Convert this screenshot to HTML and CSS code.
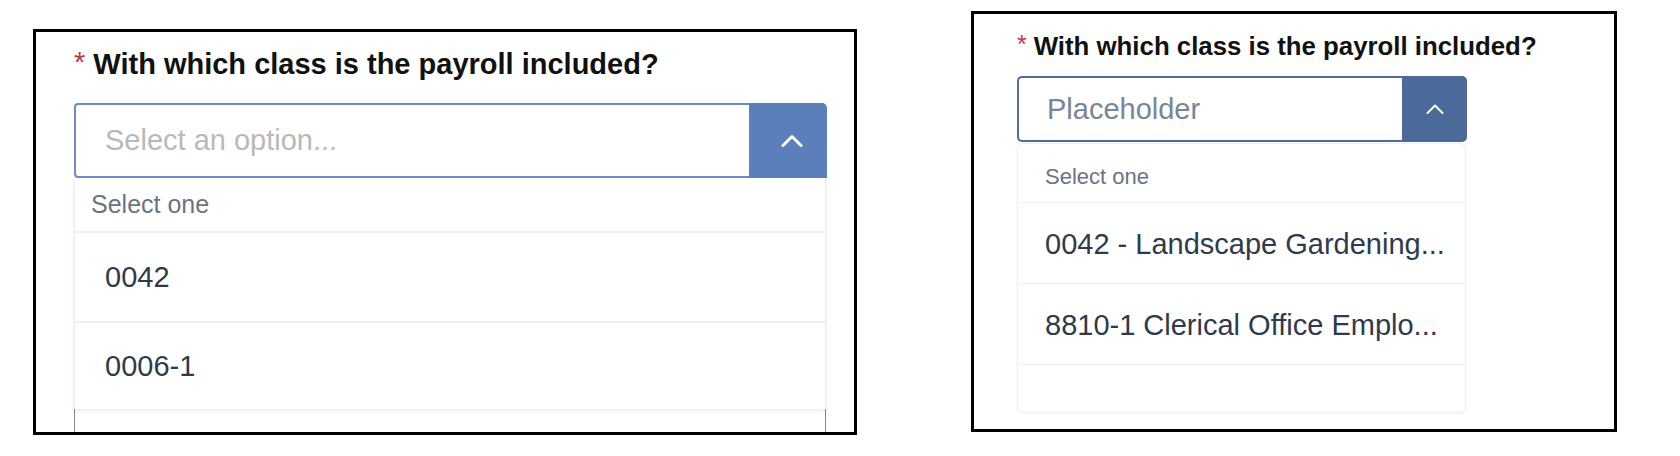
FILE: index.html
```html
<!DOCTYPE html>
<html lang="en">
<head>
<meta charset="utf-8">
<title>Class selector</title>
<link rel="stylesheet" href="styles.css">
</head>
<body>
<div class="page">
  <section class="card card-a">
    <div class="question"><span class="req">*</span>With which class is the payroll included?</div>
    <div class="select">
      <div class="field"><span class="ph">Select an option...</span></div>
      <div class="btn">
        <svg width="22" height="13" viewBox="0 0 22 13"><polyline points="2,11.5 11,2.5 20,11.5" fill="none" stroke="#fff" stroke-width="3" stroke-linecap="round" stroke-linejoin="round"/></svg>
      </div>
    </div>
    <ul class="menu">
      <li class="hdr">Select one</li>
      <li class="opt">0042</li>
      <li class="opt last">0006-1</li>
    </ul>
    <div class="below"></div>
  </section>

  <section class="card card-b">
    <div class="question"><span class="req">*</span>With which class is the payroll included?</div>
    <div class="select">
      <div class="field"><span class="ph">Placeholder</span></div>
      <div class="btn">
        <svg width="18" height="10" viewBox="0 0 18 10"><polyline points="1.5,9 9,1.5 16.5,9" fill="none" stroke="#fff" stroke-width="2" stroke-linecap="round" stroke-linejoin="round"/></svg>
      </div>
    </div>
    <ul class="menu">
      <li class="hdr">Select one</li>
      <li class="opt">0042 - Landscape Gardening...</li>
      <li class="opt">8810-1 Clerical Office Emplo...</li>
      <li class="empty"></li>
    </ul>
  </section>
</div>
</body>
</html>
```

FILE: styles.css
```css
* { box-sizing: border-box; }

html, body {
  margin: 0;
  padding: 0;
  background: #fff;
  font-family: "Liberation Sans", Arial, Helvetica, sans-serif;
}

.page {
  display: flex;
  align-items: flex-start;
  width: 1680px;
  height: 456px;
}

.card {
  border: 3px solid #000;
  background: #fff;
  overflow: hidden;
  display: flex;
  flex-direction: column;
  align-items: flex-start;
  flex-shrink: 0;
}

.card > * {
  flex-shrink: 0;
}

.question {
  font-weight: bold;
  color: #111;
  white-space: nowrap;
}

.req {
  color: #c4364b;
  font-weight: normal;
  margin-right: 8px;
  vertical-align: top;
}

.select {
  display: flex;
}

.field {
  flex: 1;
  display: flex;
  align-items: center;
  border-style: solid;
  border-right: none;
  background: #fff;
}

.btn {
  display: flex;
  align-items: center;
  justify-content: center;
}

.menu {
  list-style: none;
  margin: 0;
  padding: 0;
  background: #fff;
}

.menu li {
  white-space: nowrap;
}

/* ---------- Card A (left) ---------- */
.card-a {
  width: 824px;
  height: 406px;
  margin: 29px 0 0 33px;
  padding: 16px 0 0 38px;
}

.card-a .question {
  font-size: 29px;
  line-height: 33px;
}

.card-a .req {
  font-size: 29px;
  line-height: 28px;
  margin-top: 2px;
}

.card-a .select {
  margin-top: 22px;
  width: 753px;
  height: 75px;
}

.card-a .field {
  border-width: 2px;
  border-color: #6b8dc6;
  border-radius: 4px 0 0 4px;
  padding-left: 29px;
}

.card-a .ph {
  font-size: 29px;
  color: #b9b9b9;
}

.card-a .btn {
  width: 78px;
  background: #5a7fbb;
  border-radius: 0 5px 0 0;
  padding-left: 8px;
}

.card-a .menu {
  width: 752px;
  border-left: 1px solid #ececec;
  border-right: 1px solid #ececec;
  box-shadow: 0 2px 4px rgba(0, 0, 0, 0.08);
  position: relative;
  z-index: 1;
}

.card-a .hdr {
  height: 55px;
  line-height: 53px;
  font-size: 25px;
  color: #6a7483;
  padding-left: 16px;
  border-bottom: 2px solid #f0f0f0;
}

.card-a .opt {
  height: 90px;
  line-height: 88px;
  font-size: 29px;
  color: #2f3a4d;
  padding-left: 30px;
  border-bottom: 2px solid #f0f0f0;
}

.card-a .opt.last {
  height: 86px;
  line-height: 86px;
  border-bottom: none;
}

.card-a .below {
  width: 752px;
  height: 40px;
  border-left: 1px solid #8a8a8a;
  border-right: 1px solid #8a8a8a;
  background: #fff;
}

/* ---------- Card B (right) ---------- */
.card-b {
  width: 646px;
  height: 421px;
  margin: 11px 0 0 114px;
  padding: 18px 0 0 43px;
}

.card-b .question {
  font-size: 25.8px;
  line-height: 29px;
}

.card-b .req {
  font-size: 25px;
  line-height: 24px;
  margin-top: 2px;
  margin-right: 7px;
}

.card-b .select {
  margin-top: 15px;
  width: 450px;
  height: 66px;
}

.card-b .field {
  border-width: 2px;
  border-color: #4f6e9e;
  border-radius: 5px 0 0 5px;
  padding-left: 28px;
}

.card-b .ph {
  font-size: 29px;
  color: #7a8596;
}

.card-b .btn {
  width: 65px;
  background: #4b6a9a;
  border-radius: 0 5px 5px 0;
}

.card-b .menu {
  width: 449px;
  margin-top: 1px;
  border: 1px solid #eef0f3;
  border-radius: 6px;
  box-shadow: 0 1px 3px rgba(0, 0, 0, 0.04);
}

.card-b .hdr {
  font-size: 22px;
  line-height: 25px;
  color: #6a7483;
  padding: 20px 0 13px 27px;
  border-bottom: 1px solid #eef0f3;
}

.card-b .opt {
  font-size: 29px;
  line-height: 33px;
  color: #2f3a4d;
  padding: 25px 0 22px 27px;
  border-bottom: 1px solid #eef0f3;
}

.card-b .empty {
  height: 47px;
}
```
